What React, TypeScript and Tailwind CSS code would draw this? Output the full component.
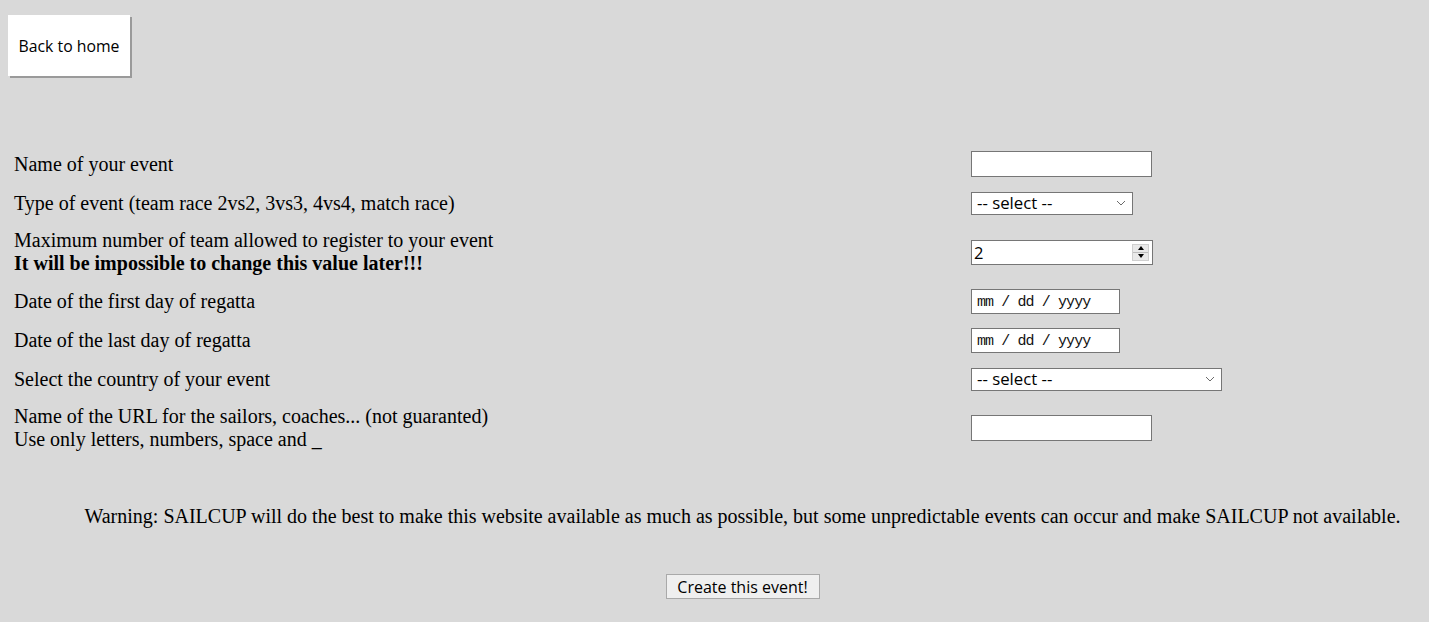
import React from "react";

const serif = { fontFamily: '"Liberation Serif", "Times New Roman", serif' };
const sans = { fontFamily: '"Open Sans", "Noto Sans", sans-serif' };

function Chevron() {
  return (
    <svg width="10" height="6" viewBox="0 0 10 6" className="shrink-0">
      <path d="M1 1 L5 5 L9 1" fill="none" stroke="#6b6b6b" strokeWidth="1" />
    </svg>
  );
}

function Select({ w }: { w: string }) {
  return (
    <div
      className={`${w} h-[23px] bg-white border border-[#767676] flex items-center justify-between pl-[5px] pr-[6px] text-[16.8px] text-black`}
      style={sans}
    >
      <span className="leading-none pt-[1px]">-- select --</span>
      <Chevron />
    </div>
  );
}

function TextInput() {
  return <div className="w-[181px] h-[26px] bg-white border border-[#767676]" />;
}

function DateInput() {
  return (
    <div
      className="w-[149px] h-[25px] bg-white border border-[#767676] flex items-center pl-[5px] text-[15px] text-[#111]"
      style={{ fontFamily: '"Liberation Mono", "Courier New", monospace' }}
    >
      <span className="tracking-[-0.9px] pt-[2px]">mm / dd / yyyy</span>
    </div>
  );
}

function NumberInput() {
  return (
    <div
      className="w-[182px] h-[25px] bg-white border border-[#767676] flex items-center justify-between pl-[2px] pr-[3px] text-[16.5px] text-black"
      style={sans}
    >
      <span className="pt-[1px]">2</span>
      <div className="w-[17px] h-[17px] bg-[#e9e9e9] flex flex-col border border-[#cfcfcf]">
        <div className="flex-1 flex items-center justify-center border-b border-[#bdbdbd]">
          <div className="w-0 h-0 border-l-[3.5px] border-r-[3.5px] border-b-[4px] border-l-transparent border-r-transparent border-b-black" />
        </div>
        <div className="flex-1 flex items-center justify-center">
          <div className="w-0 h-0 border-l-[3.5px] border-r-[3.5px] border-t-[4px] border-l-transparent border-r-transparent border-t-black" />
        </div>
      </div>
    </div>
  );
}

export default function App() {
  const rows: { label: React.ReactNode; control: React.ReactNode }[] = [
    { label: "Name of your event", control: <TextInput /> },
    { label: "Type of event (team race 2vs2, 3vs3, 4vs4, match race)", control: <Select w="w-[162px]" /> },
    {
      label: (
        <>
          Maximum number of team allowed to register to your event
          <br />
          <b>It will be impossible to change this value later!!!</b>
        </>
      ),
      control: <NumberInput />,
    },
    { label: "Date of the first day of regatta", control: <DateInput /> },
    { label: "Date of the last day of regatta", control: <DateInput /> },
    { label: "Select the country of your event", control: <Select w="w-[251px]" /> },
    {
      label: (
        <>
          Name of the URL for the sailors, coaches... (not guaranted)
          <br />
          Use only letters, numbers, space and _
        </>
      ),
      control: <TextInput />,
    },
  ];

  return (
    <div className="min-h-[622px] w-full bg-[#d9d9d9] text-black" style={serif}>
      <div className="pt-[15px] pl-[8px]">
        <button
          className="w-[122px] h-[61px] pt-[3px] bg-white text-[15.8px] text-black shadow-[2px_2px_0_#9a9a9a]"
          style={sans}
        >
          Back to home
        </button>
      </div>

      <div className="mt-[75px] pl-[14px] grid grid-cols-[957px_1fr] gap-y-[13px] text-[20px] leading-[23px]">
        {rows.map((r, i) => (
          <React.Fragment key={i}>
            <div className="min-h-[26px] flex items-center">
              <div>{r.label}</div>
            </div>
            <div className="min-h-[26px] flex items-center">{r.control}</div>
          </React.Fragment>
        ))}
      </div>

      <div className="pl-[56px] text-center">
        <p className="mt-[54px] text-[20px] leading-[23px]">
          Warning: SAILCUP will do the best to make this website available as much as possible, but some unpredictable events can occur and make SAILCUP not available.
        </p>
        <div className="mt-[46px] flex justify-center">
          <button
            className="w-[154px] h-[25px] pt-[1px] bg-[#efefef] border border-[#a9a9a9] text-[16px] leading-none text-black"
            style={sans}
          >
            Create this event!
          </button>
        </div>
      </div>
    </div>
  );
}
